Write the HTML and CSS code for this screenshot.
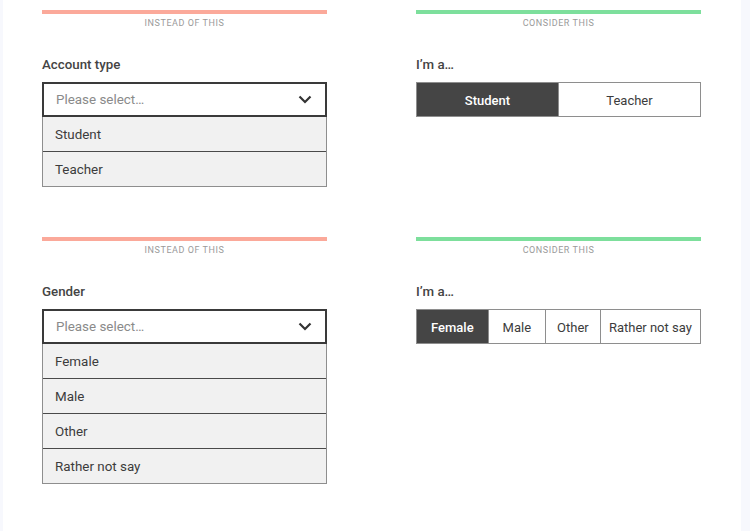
FILE: index.html
```html
<!DOCTYPE html>
<html lang="en">
  <head>
    <meta charset="utf-8" />
    <title>Dropdown vs. segmented choice</title>
    <link rel="stylesheet" href="styles.css">
  </head>
  <body>
    <div class="panel">
      <div class="row">
        <div class="col">
          <div class="bar bad"></div>
          <div class="caption">Instead of this</div>
          <div class="label">Account type</div>
          <div class="select">
            <span class="placeholder">Please select…</span>
            <svg class="chevron" width="14" height="9" viewBox="0 0 14 9"><path d="M1.5 1.5 L7 7 L12.5 1.5" fill="none" stroke="#333" stroke-width="2.2" /></svg>
          </div>
          <div class="options">
            <div class="option">Student</div>
            <div class="option">Teacher</div>
          </div>
        </div>
        <div class="col">
          <div class="bar good"></div>
          <div class="caption">Consider this</div>
          <div class="label">I’m a…</div>
          <div class="segments">
            <div class="seg half on">Student</div>
            <div class="seg half">Teacher</div>
          </div>
        </div>
      </div>

      <div class="row">
        <div class="col">
          <div class="bar bad"></div>
          <div class="caption">Instead of this</div>
          <div class="label">Gender</div>
          <div class="select">
            <span class="placeholder">Please select…</span>
            <svg class="chevron" width="14" height="9" viewBox="0 0 14 9"><path d="M1.5 1.5 L7 7 L12.5 1.5" fill="none" stroke="#333" stroke-width="2.2" /></svg>
          </div>
          <div class="options">
            <div class="option">Female</div>
            <div class="option">Male</div>
            <div class="option">Other</div>
            <div class="option">Rather not say</div>
          </div>
        </div>
        <div class="col">
          <div class="bar good"></div>
          <div class="caption">Consider this</div>
          <div class="label">I’m a…</div>
          <div class="segments">
            <div class="seg on">Female</div>
            <div class="seg">Male</div>
            <div class="seg snug">Other</div>
            <div class="seg snugger">Rather not say</div>
          </div>
        </div>
      </div>
    </div>
  </body>
</html>
```

FILE: styles.css
```css
body {
  background-color: #f7f8fd;
  color: #3c3c3c;
  font-family: Roboto, "Liberation Sans", Arial, sans-serif;
  font-size: 13px;
  margin: 0px;
  padding: 0px;
}
.panel {
  background-color: #ffffff;
  margin-left: 3px;
  width: 738px;
  min-height: 531px;
  padding-top: 10px;
  box-sizing: border-box;
}
.row {
  display: flex;
  gap: 89px;
  padding-left: 39px;
  margin-bottom: 50px;
}
.col {
  width: 285px;
}
.bar {
  height: 4px;
}
.bad {
  background-color: #fba99a;
}
.good {
  background-color: #7ddf9c;
}
.caption {
  margin-top: 4px;
  font-size: 9px;
  line-height: 11px;
  letter-spacing: 0.55px;
  text-transform: uppercase;
  text-align: center;
  color: #9a9a9a;
}
.label {
  margin-top: 28px;
  font-size: 13.3px;
  line-height: 16px;
  font-weight: 500;
  color: #444444;
}
.select {
  margin-top: 9px;
  height: 35px;
  box-sizing: border-box;
  border: 2px solid #3a3a3a;
  display: flex;
  align-items: center;
  justify-content: space-between;
  padding: 0px 12px;
}
.placeholder {
  font-size: 13.4px;
  color: #8a8a8a;
}
.chevron {
  margin-right: 1px;
}
.options {
  border: 1px solid #8e8e8e;
  border-top: none;
}
.option {
  height: 34px;
  line-height: 36px;
  padding-left: 12px;
  font-size: 13.4px;
  background-color: #f1f1f1;
}
.option + .option {
  border-top: 1px solid #4a4a4a;
}
.segments {
  margin-top: 9px;
  display: flex;
  height: 35px;
  box-sizing: border-box;
  border: 1px solid #8e8e8e;
}
.seg {
  display: flex;
  align-items: center;
  justify-content: center;
  flex: none;
  padding: 1px 14px 0px 14px;
  white-space: nowrap;
  color: #3c3c3c;
}
.seg + .seg {
  border-left: 1px solid #8e8e8e;
}
.half {
  flex: 1;
}
.snug {
  padding: 1px 11px 0px 11px;
}
.snugger {
  flex: 1;
  padding: 1px 8px 0px 8px;
}
.on {
  background-color: #454545;
  color: #ffffff;
  font-weight: 500;
}
```
